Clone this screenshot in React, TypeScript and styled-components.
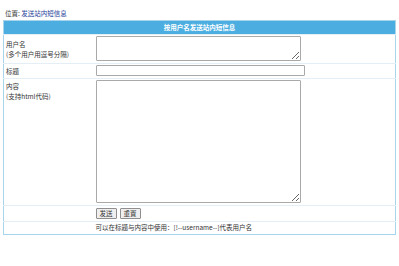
import React from "react";
import styled, { createGlobalStyle } from "styled-components";

const Global = createGlobalStyle`
  html, body { margin: 0; padding: 0; background: #fff; }
  body { font-family: "Noto Sans CJK SC", "Liberation Sans", sans-serif; font-size: 6.5px; color: #333; }
`;

const Page = styled.div`
  padding: 8px 3px 0 3px;
  width: 393px;
`;

const Location = styled.div`
  height: 12px;
  line-height: 10px;
  padding-left: 2px;
  font-size: 6.5px;
  color: #333;
`;

const Link = styled.span`
  color: #1f3f9a;
`;

const Table = styled.table`
  width: 393px;
  border: 1px solid #a8d4ec;
  border-collapse: collapse;
  table-layout: fixed;
`;

const LabelCol = styled.col`
  width: 90px;
`;

const HeadCell = styled.th`
  background: #4caee0;
  color: #fff;
  font-weight: bold;
  font-size: 6.5px;
  height: 13px;
  padding: 0;
  text-align: center;
  line-height: 13px;
`;

const Row = styled.tr`
  border-top: 1px solid #e3eef6;
`;

const Label = styled.td<{ $middle?: boolean }>`
  padding: ${(p) => (p.$middle ? "0 0 0 2px" : "2px 0 0 2px")};
  vertical-align: ${(p) => (p.$middle ? "middle" : "top")};
  line-height: 10px;
  font-size: 6.5px;
  color: #333;
`;

const Field = styled.td<{ $pad?: number }>`
  padding: ${(p) => p.$pad ?? 1}px 0 2px 2px;
  vertical-align: top;
  line-height: 9px;
`;

const Area = styled.textarea<{ $h: number }>`
  display: block;
  box-sizing: border-box;
  width: 205px;
  height: ${(p) => p.$h}px;
  border: 1px solid #a9a9a9;
  border-radius: 1px;
  margin: 0;
  padding: 1px;
  resize: vertical;
  font-size: 6.5px;
`;

const Input = styled.input`
  display: block;
  box-sizing: border-box;
  width: 209px;
  height: 11px;
  border: 1px solid #a9a9a9;
  border-radius: 1px;
  margin: 0;
  padding: 0 1px;
  font-size: 6.5px;
`;

const Buttons = styled.div`
  display: flex;
  gap: 3px;
`;

const Btn = styled.button`
  box-sizing: border-box;
  height: 11px;
  padding: 0 3px;
  border: 1px solid #8f8f8f;
  border-radius: 1px;
  background: #efefef;
  font-family: "Noto Sans CJK SC", sans-serif;
  font-size: 6.5px;
  line-height: 9px;
  color: #333;
`;

export default function App() {
  return (
    <>
      <Global />
      <Page>
        <Location>
          位置: <Link>发送站内短信息</Link>
        </Location>
        <Table>
          <colgroup>
            <LabelCol />
            <col />
          </colgroup>
          <thead>
            <tr>
              <HeadCell colSpan={2}>按用户名发送站内短信息</HeadCell>
            </tr>
          </thead>
          <tbody>
            <Row>
              <Label $middle>
                用户名
                <br />
                (多个用户用逗号分隔)
              </Label>
              <Field>
                <Area $h={25} />
              </Field>
            </Row>
            <Row>
              <Label $middle>标题</Label>
              <Field>
                <Input />
              </Field>
            </Row>
            <Row>
              <Label>
                内容
                <br />
                (支持html代码)
              </Label>
              <Field>
                <Area $h={123} />
              </Field>
            </Row>
            <Row>
              <Label />
              <Field $pad={2}>
                <Buttons>
                  <Btn>发送</Btn>
                  <Btn>重置</Btn>
                </Buttons>
              </Field>
            </Row>
            <Row>
              <Label />
              <Field $pad={1}>可以在标题与内容中使用：[!--username--]代表用户名</Field>
            </Row>
          </tbody>
        </Table>
      </Page>
    </>
  );
}
